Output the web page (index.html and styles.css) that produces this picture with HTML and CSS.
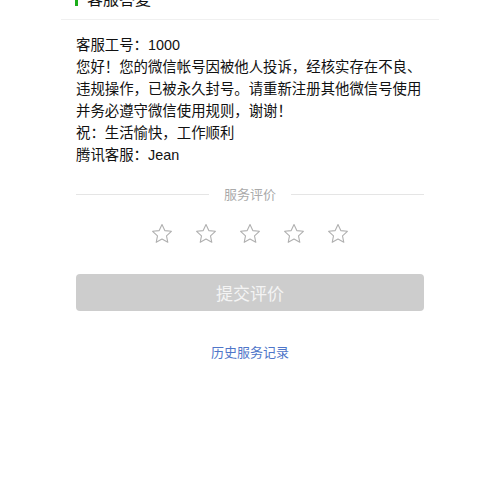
FILE: index.html
```html
<!DOCTYPE html>
<html lang="zh-CN">
<head>
<meta charset="utf-8">
<link rel="stylesheet" href="styles.css">
</head>
<body>
<div class="page">
  <div class="header"><span class="bar"></span><span class="title">客服答复</span></div>
  <div class="content">
    <div class="msg">
      <p>客服工号：1000</p>
      <p>您好！您的微信帐号因被他人投诉，经核实存在不良、违规操作，已被永久封号。请重新注册其他微信号使用并务必遵守微信使用规则，谢谢！</p>
      <p>祝：生活愉快，工作顺利</p>
      <p>腾讯客服：Jean</p>
    </div>
    <div class="divider"><span class="line"></span><span class="dtext">服务评价</span><span class="line"></span></div>
    <div class="stars">
      <svg class="star" viewBox="0 0 24 24"><polygon points="12,2.6 14.8,8.6 21.4,9.3 16.5,13.8 17.8,20.3 12,17 6.2,20.3 7.5,13.8 2.6,9.3 9.2,8.6"/></svg>
      <svg class="star" viewBox="0 0 24 24"><polygon points="12,2.6 14.8,8.6 21.4,9.3 16.5,13.8 17.8,20.3 12,17 6.2,20.3 7.5,13.8 2.6,9.3 9.2,8.6"/></svg>
      <svg class="star" viewBox="0 0 24 24"><polygon points="12,2.6 14.8,8.6 21.4,9.3 16.5,13.8 17.8,20.3 12,17 6.2,20.3 7.5,13.8 2.6,9.3 9.2,8.6"/></svg>
      <svg class="star" viewBox="0 0 24 24"><polygon points="12,2.6 14.8,8.6 21.4,9.3 16.5,13.8 17.8,20.3 12,17 6.2,20.3 7.5,13.8 2.6,9.3 9.2,8.6"/></svg>
      <svg class="star" viewBox="0 0 24 24"><polygon points="12,2.6 14.8,8.6 21.4,9.3 16.5,13.8 17.8,20.3 12,17 6.2,20.3 7.5,13.8 2.6,9.3 9.2,8.6"/></svg>
    </div>
    <div class="btn">提交评价</div>
    <div class="link">历史服务记录</div>
  </div>
</div>
</body>
</html>
```
FILE: styles.css
```css
html, body {
  margin: 0;
  padding: 0;
  background: #fff;
}
body {
  font-family: "Noto Sans CJK SC", "Noto Sans", sans-serif;
  color: #000;
  overflow: hidden;
}
.page {
  width: 378px;
  margin: 0 auto;
}
.header {
  margin-top: -23px;
  height: 42px;
  border-bottom: 1px solid #f0f0f0;
  display: flex;
  align-items: center;
  padding-left: 14px;
}
.bar {
  width: 3px;
  height: 16px;
  background: #1aad19;
  margin-right: 9px;
}
.title {
  font-size: 16px;
  line-height: 22px;
  color: #111;
}
.content {
  padding: 0 15px;
}
.msg {
  margin-top: 14px;
  font-family: "Liberation Sans", "Noto Sans CJK SC", sans-serif;
  font-size: 14.4px;
  line-height: 22px;
  color: #111;
  margin-right: -4px;
}
.msg p {
  margin: 0;
}
.divider {
  margin-top: 18px;
  display: flex;
  align-items: center;
  height: 20px;
}
.line {
  flex: 1;
  height: 1px;
  background: #e5e5e5;
}
.dtext {
  font-size: 13px;
  color: #aaa;
  padding: 0 15px;
  line-height: 20px;
}
.stars {
  margin-top: 18px;
  display: flex;
  justify-content: center;
  gap: 20px;
}
.star {
  width: 24px;
  height: 24px;
  display: block;
}
.star polygon {
  fill: none;
  stroke: #b0b0b0;
  stroke-width: 1.1;
  stroke-linejoin: round;
}
.btn {
  margin-top: 28px;
  height: 37px;
  line-height: 37px;
  background: #cdcdcd;
  border-radius: 4px;
  text-align: center;
  font-size: 17px;
  color: #f4f4f4;
}
.link {
  margin-top: 31px;
  text-align: center;
  font-size: 13px;
  line-height: 20px;
  color: #4f76c9;
}
```
